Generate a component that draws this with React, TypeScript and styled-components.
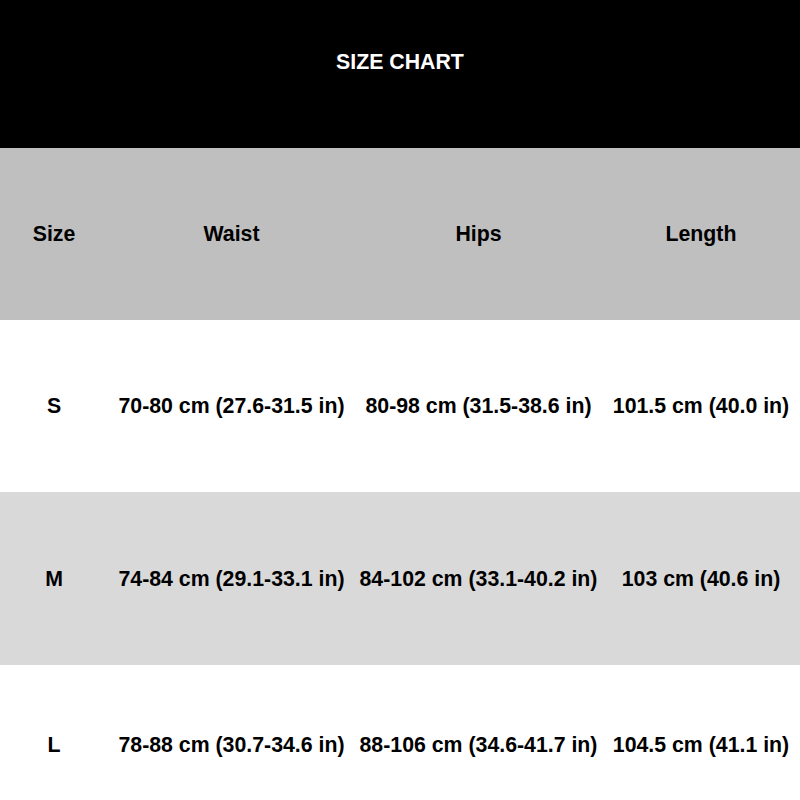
import React from "react";
import styled, { createGlobalStyle } from "styled-components";

const Global = createGlobalStyle`
  html, body { margin: 0; padding: 0; background: #ffffff; }
  body { font-family: "Liberation Sans", Arial, sans-serif; overflow: hidden; }
`;

const Chart = styled.div`
  width: 800px;
  height: 800px;
  overflow: hidden;
  display: flex;
  flex-direction: column;
`;

const Title = styled.div`
  height: 148px;
  flex: none;
  background: #000000;
  color: #ffffff;
  font-weight: bold;
  font-size: 21.3px;
  display: flex;
  align-items: center;
  justify-content: center;
  padding-bottom: 24px;
  box-sizing: border-box;
`;

const Row = styled.div<{ $bg: string; $h: number }>`
  flex: none;
  height: ${(p) => p.$h}px;
  background: ${(p) => p.$bg};
  display: grid;
  grid-template-columns: 108px 247px 247px 198px;
  align-items: center;
`;

const Cell = styled.div`
  text-align: center;
  font-weight: bold;
  font-size: 21.3px;
  color: #000000;
  white-space: nowrap;
  padding-top: 1px;
`;

const rows = [
  ["S", "70-80 cm (27.6-31.5 in)", "80-98 cm (31.5-38.6 in)", "101.5 cm (40.0 in)"],
  ["M", "74-84 cm (29.1-33.1 in)", "84-102 cm (33.1-40.2 in)", "103 cm (40.6 in)"],
  ["L", "78-88 cm (30.7-34.6 in)", "88-106 cm (34.6-41.7 in)", "104.5 cm (41.1 in)"],
];

const bgs = ["#ffffff", "#d9d9d9", "#ffffff"];
const heights = [172, 173, 159];

export default function App() {
  return (
    <>
      <Global />
      <Chart>
        <Title>SIZE CHART</Title>
        <Row $bg="#bfbfbf" $h={172}>
          <Cell>Size</Cell>
          <Cell>Waist</Cell>
          <Cell>Hips</Cell>
          <Cell>Length</Cell>
        </Row>
        {rows.map((r, i) => (
          <Row key={r[0]} $bg={bgs[i]} $h={heights[i]}>
            {r.map((c) => (
              <Cell key={c}>{c}</Cell>
            ))}
          </Row>
        ))}
      </Chart>
    </>
  );
}
